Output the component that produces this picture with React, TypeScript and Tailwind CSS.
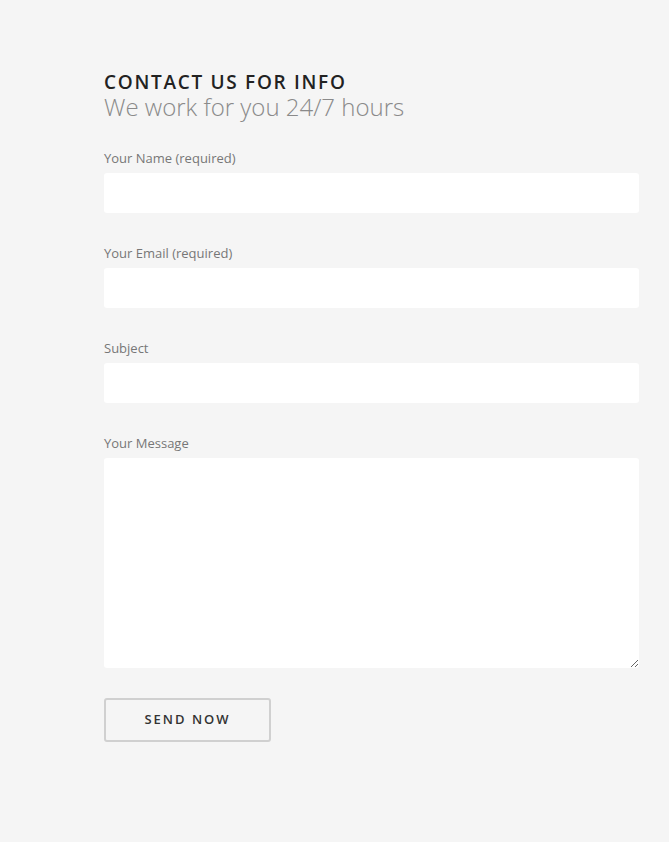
import React from 'react';

const fields = [
  { id: 'name', label: 'Your Name (required)' },
  { id: 'email', label: 'Your Email (required)' },
  { id: 'subject', label: 'Subject' },
];

export default function App() {
  return (
    <div className="min-h-[842px] w-full bg-[#f5f5f5] font-['Open_Sans',sans-serif]">
      <div className="pl-[104px] pr-[30px] pt-[70px] pb-[100px]">
        <h2 className="text-[19px] leading-[24px] font-semibold tracking-[1.7px] text-[#222]">CONTACT US FOR INFO</h2>
        <p className="text-[24px] leading-[25px] font-light text-[#8a8a8a]">We work for you 24/7 hours</p>

        <form className="mt-[28px]">
          {fields.map(f => (
            <div key={f.id} className="mb-[29px]">
              <label htmlFor={f.id} className="block text-[13px] leading-[22px] text-[#777] mb-[4px]">{f.label}</label>
              <input id={f.id} type="text" className="block w-full h-[40px] bg-white rounded-[3px] px-3 outline-none" />
            </div>
          ))}
          <div>
            <label htmlFor="message" className="block text-[13px] leading-[22px] text-[#777] mb-[4px]">Your Message</label>
            <textarea id="message" className="block w-full h-[210px] bg-white rounded-[3px] px-3 py-2 outline-none resize" />
          </div>
          <button type="button" className="mt-[30px] w-[167px] h-[44px] border-2 border-[#d0d0d0] rounded-[3px] text-[13px] font-semibold tracking-[2px] text-[#333]">SEND NOW</button>
        </form>
      </div>
    </div>
  );
}
